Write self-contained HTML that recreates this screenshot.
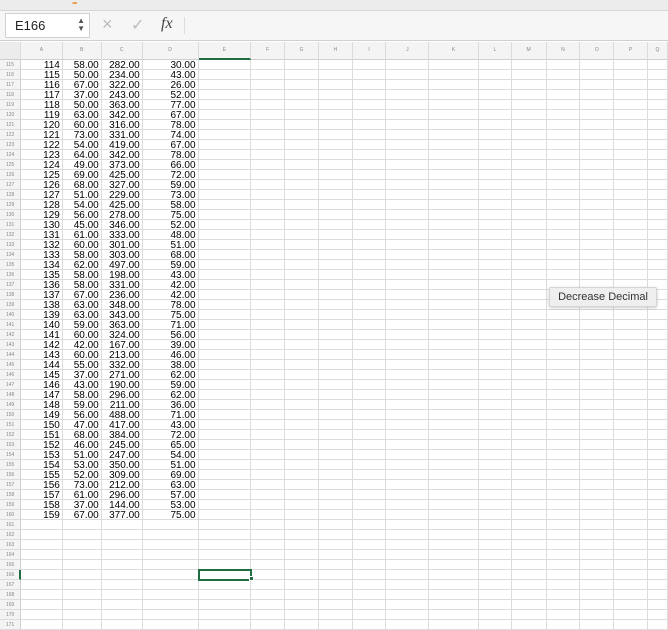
<!DOCTYPE html>
<html><head><meta charset="utf-8"><style>
*{margin:0;padding:0;box-sizing:border-box}
body{width:668px;height:628px;overflow:hidden;background:#fff;font-family:"Liberation Sans",Arial,sans-serif;position:relative}
.top{position:absolute;left:0;top:0;width:668px;height:11px;background:#ececec;border-bottom:1px solid #d6d6d6}
.fbar{position:absolute;left:0;top:11px;width:668px;height:30px;background:#f6f6f6;border-bottom:1px solid #cfcfcf}
.nb{position:absolute;left:5px;top:2px;width:85px;height:25px;background:#fff;border:1px solid #d0d0d0;font-size:13px;line-height:23px;padding-left:9px;color:#222}
table{position:absolute;left:0;top:42px;border-collapse:separate;border-spacing:0;table-layout:fixed}
td{height:10px;border-right:1px solid #dcdcdc;border-bottom:1px solid #dcdcdc;font-size:10px;line-height:7px;text-align:right;padding-right:2px;padding-top:2px;color:#000;overflow:visible;white-space:nowrap;vertical-align:top}
tr.h td{height:18px;background:#f4f4f4;font-size:5px;line-height:5px;color:#888;text-align:center;vertical-align:middle;padding:0;border-bottom:1px solid #cfcfcf}
td.r{background:#f4f4f4;font-size:5px;color:#888;text-align:left;padding-left:6px;padding-right:0;border-right:1px solid #cfcfcf}
.tip{position:absolute;left:549px;top:287px;width:108px;height:20px;background:#efefef;border:1px solid #d4d4d4;border-radius:2px;box-shadow:0 1px 3px rgba(0,0,0,.2);font-size:11px;line-height:18px;text-align:center;color:#333}
</style></head><body>
<div class="top"><div style="position:absolute;left:72px;top:0;width:5px;height:4px;border-bottom:2px solid #e8a55a;border-left:1px solid transparent"></div></div>
<div class="fbar">
<div class="nb">E166<span style="position:absolute;right:4px;top:3px;font-size:8px;line-height:8px;color:#555">▲<br>▼</span></div>
<div style="position:absolute;left:102px;top:3px;font-size:18px;color:#bbb">×</div>
<div style="position:absolute;left:131px;top:4px;font-size:16px;color:#bbb">✓</div>
<div style="position:absolute;left:161px;top:4px;font-size:16px;font-style:italic;font-family:'Liberation Serif',serif;color:#444">fx</div>
<div style="position:absolute;left:184px;top:6px;width:1px;height:17px;background:#ddd"></div>
</div>
<table>
<colgroup><col style="width:21px"><col style="width:42px"><col style="width:39px"><col style="width:41px"><col style="width:56px"><col style="width:53px"><col style="width:34px"><col style="width:34px"><col style="width:34px"><col style="width:34px"><col style="width:43px"><col style="width:50px"><col style="width:33px"><col style="width:35px"><col style="width:34px"><col style="width:34px"><col style="width:34px"><col style="width:20px"></colgroup>
<tr class="h"><td style="background:#ececec"></td><td>A</td><td>B</td><td>C</td><td>D</td><td style="border-bottom:2px solid #1f6e43">E</td><td>F</td><td>G</td><td>H</td><td>I</td><td>J</td><td>K</td><td>L</td><td>M</td><td>N</td><td>O</td><td>P</td><td>Q</td></tr>
<tr><td class="r">115</td><td>114</td><td>58.00</td><td>282.00</td><td>30.00</td><td></td><td></td><td></td><td></td><td></td><td></td><td></td><td></td><td></td><td></td><td></td><td></td><td></td></tr>
<tr><td class="r">116</td><td>115</td><td>50.00</td><td>234.00</td><td>43.00</td><td></td><td></td><td></td><td></td><td></td><td></td><td></td><td></td><td></td><td></td><td></td><td></td><td></td></tr>
<tr><td class="r">117</td><td>116</td><td>67.00</td><td>322.00</td><td>26.00</td><td></td><td></td><td></td><td></td><td></td><td></td><td></td><td></td><td></td><td></td><td></td><td></td><td></td></tr>
<tr><td class="r">118</td><td>117</td><td>37.00</td><td>243.00</td><td>52.00</td><td></td><td></td><td></td><td></td><td></td><td></td><td></td><td></td><td></td><td></td><td></td><td></td><td></td></tr>
<tr><td class="r">119</td><td>118</td><td>50.00</td><td>363.00</td><td>77.00</td><td></td><td></td><td></td><td></td><td></td><td></td><td></td><td></td><td></td><td></td><td></td><td></td><td></td></tr>
<tr><td class="r">120</td><td>119</td><td>63.00</td><td>342.00</td><td>67.00</td><td></td><td></td><td></td><td></td><td></td><td></td><td></td><td></td><td></td><td></td><td></td><td></td><td></td></tr>
<tr><td class="r">121</td><td>120</td><td>60.00</td><td>316.00</td><td>78.00</td><td></td><td></td><td></td><td></td><td></td><td></td><td></td><td></td><td></td><td></td><td></td><td></td><td></td></tr>
<tr><td class="r">122</td><td>121</td><td>73.00</td><td>331.00</td><td>74.00</td><td></td><td></td><td></td><td></td><td></td><td></td><td></td><td></td><td></td><td></td><td></td><td></td><td></td></tr>
<tr><td class="r">123</td><td>122</td><td>54.00</td><td>419.00</td><td>67.00</td><td></td><td></td><td></td><td></td><td></td><td></td><td></td><td></td><td></td><td></td><td></td><td></td><td></td></tr>
<tr><td class="r">124</td><td>123</td><td>64.00</td><td>342.00</td><td>78.00</td><td></td><td></td><td></td><td></td><td></td><td></td><td></td><td></td><td></td><td></td><td></td><td></td><td></td></tr>
<tr><td class="r">125</td><td>124</td><td>49.00</td><td>373.00</td><td>66.00</td><td></td><td></td><td></td><td></td><td></td><td></td><td></td><td></td><td></td><td></td><td></td><td></td><td></td></tr>
<tr><td class="r">126</td><td>125</td><td>69.00</td><td>425.00</td><td>72.00</td><td></td><td></td><td></td><td></td><td></td><td></td><td></td><td></td><td></td><td></td><td></td><td></td><td></td></tr>
<tr><td class="r">127</td><td>126</td><td>68.00</td><td>327.00</td><td>59.00</td><td></td><td></td><td></td><td></td><td></td><td></td><td></td><td></td><td></td><td></td><td></td><td></td><td></td></tr>
<tr><td class="r">128</td><td>127</td><td>51.00</td><td>229.00</td><td>73.00</td><td></td><td></td><td></td><td></td><td></td><td></td><td></td><td></td><td></td><td></td><td></td><td></td><td></td></tr>
<tr><td class="r">129</td><td>128</td><td>54.00</td><td>425.00</td><td>58.00</td><td></td><td></td><td></td><td></td><td></td><td></td><td></td><td></td><td></td><td></td><td></td><td></td><td></td></tr>
<tr><td class="r">130</td><td>129</td><td>56.00</td><td>278.00</td><td>75.00</td><td></td><td></td><td></td><td></td><td></td><td></td><td></td><td></td><td></td><td></td><td></td><td></td><td></td></tr>
<tr><td class="r">131</td><td>130</td><td>45.00</td><td>346.00</td><td>52.00</td><td></td><td></td><td></td><td></td><td></td><td></td><td></td><td></td><td></td><td></td><td></td><td></td><td></td></tr>
<tr><td class="r">132</td><td>131</td><td>61.00</td><td>333.00</td><td>48.00</td><td></td><td></td><td></td><td></td><td></td><td></td><td></td><td></td><td></td><td></td><td></td><td></td><td></td></tr>
<tr><td class="r">133</td><td>132</td><td>60.00</td><td>301.00</td><td>51.00</td><td></td><td></td><td></td><td></td><td></td><td></td><td></td><td></td><td></td><td></td><td></td><td></td><td></td></tr>
<tr><td class="r">134</td><td>133</td><td>58.00</td><td>303.00</td><td>68.00</td><td></td><td></td><td></td><td></td><td></td><td></td><td></td><td></td><td></td><td></td><td></td><td></td><td></td></tr>
<tr><td class="r">135</td><td>134</td><td>62.00</td><td>497.00</td><td>59.00</td><td></td><td></td><td></td><td></td><td></td><td></td><td></td><td></td><td></td><td></td><td></td><td></td><td></td></tr>
<tr><td class="r">136</td><td>135</td><td>58.00</td><td>198.00</td><td>43.00</td><td></td><td></td><td></td><td></td><td></td><td></td><td></td><td></td><td></td><td></td><td></td><td></td><td></td></tr>
<tr><td class="r">137</td><td>136</td><td>58.00</td><td>331.00</td><td>42.00</td><td></td><td></td><td></td><td></td><td></td><td></td><td></td><td></td><td></td><td></td><td></td><td></td><td></td></tr>
<tr><td class="r">138</td><td>137</td><td>67.00</td><td>236.00</td><td>42.00</td><td></td><td></td><td></td><td></td><td></td><td></td><td></td><td></td><td></td><td></td><td></td><td></td><td></td></tr>
<tr><td class="r">139</td><td>138</td><td>63.00</td><td>348.00</td><td>78.00</td><td></td><td></td><td></td><td></td><td></td><td></td><td></td><td></td><td></td><td></td><td></td><td></td><td></td></tr>
<tr><td class="r">140</td><td>139</td><td>63.00</td><td>343.00</td><td>75.00</td><td></td><td></td><td></td><td></td><td></td><td></td><td></td><td></td><td></td><td></td><td></td><td></td><td></td></tr>
<tr><td class="r">141</td><td>140</td><td>59.00</td><td>363.00</td><td>71.00</td><td></td><td></td><td></td><td></td><td></td><td></td><td></td><td></td><td></td><td></td><td></td><td></td><td></td></tr>
<tr><td class="r">142</td><td>141</td><td>60.00</td><td>324.00</td><td>56.00</td><td></td><td></td><td></td><td></td><td></td><td></td><td></td><td></td><td></td><td></td><td></td><td></td><td></td></tr>
<tr><td class="r">143</td><td>142</td><td>42.00</td><td>167.00</td><td>39.00</td><td></td><td></td><td></td><td></td><td></td><td></td><td></td><td></td><td></td><td></td><td></td><td></td><td></td></tr>
<tr><td class="r">144</td><td>143</td><td>60.00</td><td>213.00</td><td>46.00</td><td></td><td></td><td></td><td></td><td></td><td></td><td></td><td></td><td></td><td></td><td></td><td></td><td></td></tr>
<tr><td class="r">145</td><td>144</td><td>55.00</td><td>332.00</td><td>38.00</td><td></td><td></td><td></td><td></td><td></td><td></td><td></td><td></td><td></td><td></td><td></td><td></td><td></td></tr>
<tr><td class="r">146</td><td>145</td><td>37.00</td><td>271.00</td><td>62.00</td><td></td><td></td><td></td><td></td><td></td><td></td><td></td><td></td><td></td><td></td><td></td><td></td><td></td></tr>
<tr><td class="r">147</td><td>146</td><td>43.00</td><td>190.00</td><td>59.00</td><td></td><td></td><td></td><td></td><td></td><td></td><td></td><td></td><td></td><td></td><td></td><td></td><td></td></tr>
<tr><td class="r">148</td><td>147</td><td>58.00</td><td>296.00</td><td>62.00</td><td></td><td></td><td></td><td></td><td></td><td></td><td></td><td></td><td></td><td></td><td></td><td></td><td></td></tr>
<tr><td class="r">149</td><td>148</td><td>59.00</td><td>211.00</td><td>36.00</td><td></td><td></td><td></td><td></td><td></td><td></td><td></td><td></td><td></td><td></td><td></td><td></td><td></td></tr>
<tr><td class="r">150</td><td>149</td><td>56.00</td><td>488.00</td><td>71.00</td><td></td><td></td><td></td><td></td><td></td><td></td><td></td><td></td><td></td><td></td><td></td><td></td><td></td></tr>
<tr><td class="r">151</td><td>150</td><td>47.00</td><td>417.00</td><td>43.00</td><td></td><td></td><td></td><td></td><td></td><td></td><td></td><td></td><td></td><td></td><td></td><td></td><td></td></tr>
<tr><td class="r">152</td><td>151</td><td>68.00</td><td>384.00</td><td>72.00</td><td></td><td></td><td></td><td></td><td></td><td></td><td></td><td></td><td></td><td></td><td></td><td></td><td></td></tr>
<tr><td class="r">153</td><td>152</td><td>46.00</td><td>245.00</td><td>65.00</td><td></td><td></td><td></td><td></td><td></td><td></td><td></td><td></td><td></td><td></td><td></td><td></td><td></td></tr>
<tr><td class="r">154</td><td>153</td><td>51.00</td><td>247.00</td><td>54.00</td><td></td><td></td><td></td><td></td><td></td><td></td><td></td><td></td><td></td><td></td><td></td><td></td><td></td></tr>
<tr><td class="r">155</td><td>154</td><td>53.00</td><td>350.00</td><td>51.00</td><td></td><td></td><td></td><td></td><td></td><td></td><td></td><td></td><td></td><td></td><td></td><td></td><td></td></tr>
<tr><td class="r">156</td><td>155</td><td>52.00</td><td>309.00</td><td>69.00</td><td></td><td></td><td></td><td></td><td></td><td></td><td></td><td></td><td></td><td></td><td></td><td></td><td></td></tr>
<tr><td class="r">157</td><td>156</td><td>73.00</td><td>212.00</td><td>63.00</td><td></td><td></td><td></td><td></td><td></td><td></td><td></td><td></td><td></td><td></td><td></td><td></td><td></td></tr>
<tr><td class="r">158</td><td>157</td><td>61.00</td><td>296.00</td><td>57.00</td><td></td><td></td><td></td><td></td><td></td><td></td><td></td><td></td><td></td><td></td><td></td><td></td><td></td></tr>
<tr><td class="r">159</td><td>158</td><td>37.00</td><td>144.00</td><td>53.00</td><td></td><td></td><td></td><td></td><td></td><td></td><td></td><td></td><td></td><td></td><td></td><td></td><td></td></tr>
<tr><td class="r">160</td><td>159</td><td>67.00</td><td>377.00</td><td>75.00</td><td></td><td></td><td></td><td></td><td></td><td></td><td></td><td></td><td></td><td></td><td></td><td></td><td></td></tr>
<tr><td class="r">161</td><td></td><td></td><td></td><td></td><td></td><td></td><td></td><td></td><td></td><td></td><td></td><td></td><td></td><td></td><td></td><td></td><td></td></tr>
<tr><td class="r">162</td><td></td><td></td><td></td><td></td><td></td><td></td><td></td><td></td><td></td><td></td><td></td><td></td><td></td><td></td><td></td><td></td><td></td></tr>
<tr><td class="r">163</td><td></td><td></td><td></td><td></td><td></td><td></td><td></td><td></td><td></td><td></td><td></td><td></td><td></td><td></td><td></td><td></td><td></td></tr>
<tr><td class="r">164</td><td></td><td></td><td></td><td></td><td></td><td></td><td></td><td></td><td></td><td></td><td></td><td></td><td></td><td></td><td></td><td></td><td></td></tr>
<tr><td class="r">165</td><td></td><td></td><td></td><td></td><td></td><td></td><td></td><td></td><td></td><td></td><td></td><td></td><td></td><td></td><td></td><td></td><td></td></tr>
<tr><td class="r" style="border-right:2px solid #1f6e43">166</td><td></td><td></td><td></td><td></td><td style="outline:2px solid #1f6e43;outline-offset:-1px"></td><td></td><td></td><td></td><td></td><td></td><td></td><td></td><td></td><td></td><td></td><td></td><td></td></tr>
<tr><td class="r">167</td><td></td><td></td><td></td><td></td><td></td><td></td><td></td><td></td><td></td><td></td><td></td><td></td><td></td><td></td><td></td><td></td><td></td></tr>
<tr><td class="r">168</td><td></td><td></td><td></td><td></td><td></td><td></td><td></td><td></td><td></td><td></td><td></td><td></td><td></td><td></td><td></td><td></td><td></td></tr>
<tr><td class="r">169</td><td></td><td></td><td></td><td></td><td></td><td></td><td></td><td></td><td></td><td></td><td></td><td></td><td></td><td></td><td></td><td></td><td></td></tr>
<tr><td class="r">170</td><td></td><td></td><td></td><td></td><td></td><td></td><td></td><td></td><td></td><td></td><td></td><td></td><td></td><td></td><td></td><td></td><td></td></tr>
<tr><td class="r">171</td><td></td><td></td><td></td><td></td><td></td><td></td><td></td><td></td><td></td><td></td><td></td><td></td><td></td><td></td><td></td><td></td><td></td></tr>
</table>
<div style="position:absolute;left:249px;top:576px;width:5px;height:5px;background:#1f6e43;border:1px solid #fff"></div>
<div class="tip">Decrease Decimal</div>
</body></html>
